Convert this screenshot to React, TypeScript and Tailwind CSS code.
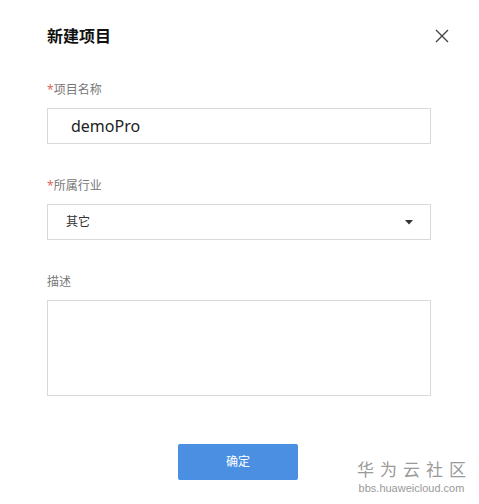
import React from "react";

export default function App() {
  const font = { fontFamily: '"Noto Sans", "Noto Sans CJK SC", sans-serif' };
  return (
    <div
      className="relative w-[479px] h-[504px] bg-white overflow-hidden"
      style={font}
    >
      <div className="flex flex-col pl-[47px] pr-[48px]">
        <div className="mt-[24px] h-[24px] flex items-center justify-between">
          <span className="text-[16px] font-bold text-[#111] leading-[24px]">新建项目</span>
          <svg
            width="14"
            height="14"
            viewBox="0 0 14 14"
            className="mr-[-18px]"
          >
            <path d="M1 1 L13 13 M13 1 L1 13" stroke="#444" strokeWidth="1.4" />
          </svg>
        </div>

        <div className="mt-[33px] h-[18px] text-[12px] leading-[18px] text-[#777]">
          <span className="text-[#e0645c]">*</span>项目名称
        </div>
        <div className="mt-[9px] h-[36px] border border-[#d9d9d9] flex items-center pl-[23px] text-[16px] text-[#222]">
          demoPro
        </div>

        <div className="mt-[33px] h-[18px] text-[12px] leading-[18px] text-[#777]">
          <span className="text-[#e0645c]">*</span>所属行业
        </div>
        <div className="mt-[9px] h-[36px] border border-[#d9d9d9] flex items-center justify-between pl-[18px] pr-[17px] text-[12px] text-[#333]">
          <span>其它</span>
          <svg width="8" height="5" viewBox="0 0 8 5">
            <path d="M0 0 L8 0 L4 4.5 Z" fill="#333" />
          </svg>
        </div>

        <div className="mt-[33px] h-[18px] text-[12px] leading-[18px] text-[#777]">描述</div>
        <div className="mt-[9px] h-[96px] border border-[#d9d9d9]" />

        <div className="mt-[48px] flex justify-center">
          <div className="w-[120px] h-[36px] ml-[-2px] rounded-[2px] bg-[#4a8fe2] flex items-center justify-center text-white text-[12px]">
            确定
          </div>
        </div>
      </div>

      <div className="absolute right-[13px] top-[459px] flex flex-col items-center">
        <span className="text-[17px] leading-[22px] tracking-[6px] text-[#9a9a9a] mr-[-6px]">华为云社区</span>
        <span className="text-[11px] leading-[14px] text-[#9a9a9a]" style={{ fontFamily: '"Liberation Sans", sans-serif' }}>
          bbs.huaweicloud.com
        </span>
      </div>
    </div>
  );
}
